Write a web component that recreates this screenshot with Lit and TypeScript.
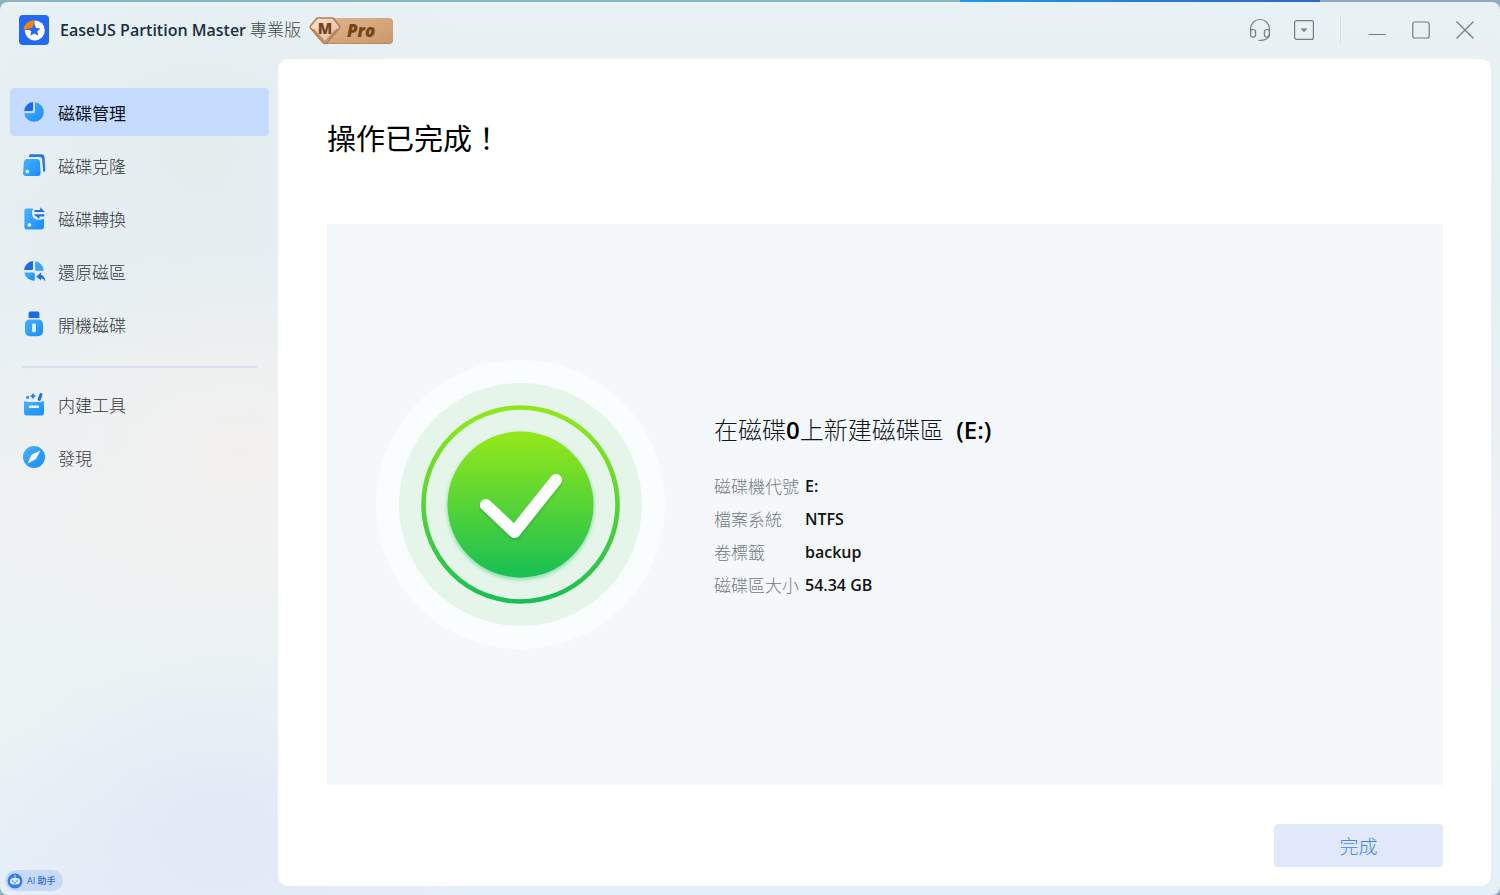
import { LitElement, html, css, svg } from "lit";
import { customElement, property, state } from "lit/decorators.js";

interface NavEntry {
  id: string;
  label: string;
}

const PRIMARY: NavEntry[] = [
  { id: "manage", label: "磁碟管理" },
  { id: "clone", label: "磁碟克隆" },
  { id: "convert", label: "磁碟轉換" },
  { id: "recover", label: "還原磁區" },
  { id: "boot", label: "開機磁碟" },
];

const SECONDARY: NavEntry[] = [
  { id: "tools", label: "内建工具" },
  { id: "discover", label: "發現" },
];

const DETAILS: [string, string][] = [
  ["磁碟機代號", "E:"],
  ["檔案系統", "NTFS"],
  ["卷標籤", "backup"],
  ["磁碟區大小", "54.34 GB"],
];

const GLYPHS: Record<string, unknown> = {
  manage: svg`
    <path d="M13 2.3A9.8 9.8 0 1 1 2.2 13.2H11.4A1.6 1.6 0 0 0 13 11.6Z" fill="url(#light)"/>
    <path d="M11 2.1V9.8A1.3 1.3 0 0 1 9.7 11.1H2.1A9.7 9.7 0 0 1 11 2.1Z" fill="#1a6be8"/>`,
  clone: svg`
    <path d="M8 1.2H19.4Q22.2 1.2 22.5 4L23.4 17.2Q23.4 18.8 21.2 18.8L20.2 6.4Q20 4 17.6 4H7Q7 1.2 8 1.2Z" fill="#2b74e4"/>
    <path d="M5 6H15Q17.6 6 17.9 8.6L18.6 20Q18.6 23 16 23H4Q1 23 1.1 20L2 8.6Q2.4 6 5 6Z" fill="url(#light)"/>
    <circle cx="5.2" cy="18.6" r="1.9" fill="#eaf7ff"/>`,
  convert: svg`
    <path d="M4.500 2.400H11.500Q10 4 10 7.500Q10.400 13 15.500 13.800Q19 14 22 12.800V21Q22 23.400 19.600 23.400H4.600Q2.400 23.400 2.400 21.200V4.600Q2.400 2.400 4.500 2.400Z" fill="url(#light)"/>
    <circle cx="7.400" cy="18.800" r="1.900" fill="#eaf7ff"/>
    <path d="M12.400 4H18.200V1.200L22.300 5.200V6H12.400Z" fill="#2370e3"/>
    <path d="M22.300 10.400H17.400V13L12.400 9V8.200H22.300Z" fill="#2370e3"/>`,
  recover: svg`
    <path d="M13.2 2.2A9.8 9.8 0 0 1 21.8 11.8H13.2Z" fill="#35a5fb"/>
    <path d="M2.2 13.4H11Q12.8 13.4 13 15.4L12.6 21.6A9.8 9.8 0 0 1 2.2 13.4Z" fill="url(#light)"/>
    <path d="M11 2.1V9.8A1.3 1.3 0 0 1 9.7 11.1H2.1A9.7 9.7 0 0 1 11 2.1Z" fill="#1a6be8"/>
    <path d="M14.2 17.4L19 13.4V15.8Q22.8 16.8 23.4 22.4Q21.4 19.4 19 19.2V21.4Z" fill="#2671e4"/>`,
  boot: svg`
    <path d="M8.2 -.4H15.8Q17.4 -.4 17.4 1.4V6H6.6V1.4Q6.6 -.4 8.2 -.4Z" fill="#1a6be8"/>
    <rect x="3" y="7.4" width="18" height="16.8" rx="4.600" fill="url(#light)"/>
    <rect x="10.2" y="11.4" width="3.6" height="8.8" rx="1.2" fill="#e5f6ff"/>`,
  tools: svg`
    <path d="M2 9.2Q12 11 22 9.2V21Q22 23.4 19.6 23.4H4.4Q2 23.4 2 21Z" fill="url(#light)"/>
    <path d="M11 1L12.1 3L14.2 4.1L12.1 5.2L11 7.3L9.9 5.2L7.8 4.1L9.9 3Z" fill="#2b7bea"/>
    <circle cx="5.6" cy="5.4" r="1.6" fill="#3a96f3"/>
    <path d="M19 2.6L17.2 7.4" stroke="#2370e3" stroke-width="3" stroke-linecap="round"/>
    <path d="M8 14.8H16" stroke="#f0faff" stroke-width="2.4" stroke-linecap="round"/>`,
  discover: svg`
    <circle cx="12" cy="12" r="11" fill="url(#light)"/>
    <path d="M18.4 5.6L14 14L5.6 18.4L9.6 9.8Z" fill="#fff"/>`,
};

@customElement("nav-item")
class NavItem extends LitElement {
  @property() icon = "";
  @property() label = "";
  @property({ type: Boolean }) active = false;

  static styles = css`
    :host { display: block; }
    .item {
      display: flex; align-items: center; gap: 12px;
      width: 100%; height: 48px; padding: 0 12px;
      border: 0; border-radius: 4px; background: none;
      font: inherit; font-size: 17px; color: #35393b; text-align: left; cursor: pointer;
    }
    .item.active { background: #c5dbff; color: #0b1320; font-weight: 400; }
    .icon { width: 24px; height: 24px; overflow: visible; flex: none; }
  `;

  render() {
    return html`
      <button class="item ${this.active ? "active" : ""}" aria-current=${this.active ? "page" : "false"}>
        <svg class="icon" viewBox="0 0 24 24" aria-hidden="true">
          <defs>
            <linearGradient id="light" x1="0" y1="0" x2="1" y2="1">
              <stop offset="0" stop-color="#4ab2fb"/>
              <stop offset="1" stop-color="#178cfa"/>
            </linearGradient>
          </defs>
          ${GLYPHS[this.icon]}
        </svg>
        <span>${this.label}</span>
      </button>`;
  }
}

@customElement("title-bar")
class TitleBar extends LitElement {
  static styles = css`
    :host { display: flex; align-items: center; justify-content: space-between; box-sizing: border-box; height: 57px; padding: 0 20px 2px 19px; }
    .brand, .actions, .name { display: flex; align-items: center; }
    .name { gap: 4px; margin: 0 8px 0 11px; font-size: 17px; line-height: 24px; color: #3c474d; }
    .product { font-weight: 600; font-size: 16px; color: #1e3040; }
    .logo { width: 30px; height: 30px; }
    .pro { width: 84px; height: 30px; }
    .tier { font: italic 800 17px "Open Sans", "Noto Sans", sans-serif; fill: #774419; }
    .grade { font: 800 15px "Open Sans", "Noto Sans", sans-serif; fill: #774419; }
    .tool { display: grid; place-items: center; width: 30px; height: 30px; padding: 0; border: 0; background: none; cursor: pointer; }
    .tool svg { width: 24px; height: 24px; fill: none; stroke: #737d82; stroke-width: 1.2; }
    .actions { gap: 14px; }
    .rule { width: 1px; height: 28px; margin: 0 7px; background: #d8e1e6; }
  `;

  render() {
    return html`
      <div class="brand">
        <svg class="logo" viewBox="0 0 30 30" aria-hidden="true">
          <rect width="30" height="30" rx="4" fill="#2468f6"/>
          <circle cx="15.800" cy="15.400" r="10" fill="#fff"/>
          <path d="M15.500 4.500V11L11 15H3.500Q4 6 15.500 4.500Z" fill="#2468f6"/>
          <path d="M15.300 9L17.100 13L21.600 13.400L18.300 16.400L19.300 20.800L15.300 18.500L11.300 20.800L12.300 16.400L9 13.400L13.500 13Z" fill="#2468f6"/>
          <path d="M14.800 5V9L12.800 13L9 13.600L8 14.400H4.400Q5.200 6.800 14.800 5Z" fill="#f8820e"/>
        </svg>
        <div class="name"><span class="product">EaseUS Partition Master</span><span>專業版</span></div>
        <svg class="pro" viewBox="0 0 84 30" role="img" aria-label="Pro">
          <defs>
            <linearGradient id="bronze" x1="0" y1="0" x2="1" y2="1">
              <stop offset="0" stop-color="#e0b48e"/><stop offset="1" stop-color="#cc986a"/>
            </linearGradient>
            <linearGradient id="gem" x1="0" y1="0" x2="1" y2="1">
              <stop offset="0" stop-color="#fae3d0"/><stop offset="1" stop-color="#e3b795"/>
            </linearGradient>
          </defs>
          <path d="M9 20H84V25Q84 29 80 29H17Z" fill="#b9895f"/>
          <rect x="12" y="3" width="72" height="25" rx="4" fill="url(#bronze)"/>
          <path d="M8 3H24L30.500 11Q31 12 30.500 13L18 27.500Q16 29.500 14 27.500L1.500 13Q1 12 1.500 11Z" fill="url(#gem)" stroke="#b17d55" stroke-width="1.600" stroke-linejoin="round"/>
          <path d="M4 14L16 27L28 14" fill="none" stroke="#bd8659" stroke-width="1.400"/>
          <text class="grade" x="16" y="19" text-anchor="middle">M</text>
          <text class="tier" x="38" y="22">Pro</text>
        </svg>
      </div>
      <div class="actions">
        <button class="tool" aria-label="支援">
          <svg viewBox="0 0 24 24"><path d="M2.600 13V10.500A9.400 9 0 0 1 21.400 10.500V13"/><rect x="2.600" y="11.500" width="5" height="7.600" rx="2.400"/><rect x="16.400" y="11.500" width="5" height="7.600" rx="2.400"/><path d="M21.400 16Q21.400 22.500 10.500 22.500"/></svg>
        </button>
        <button class="tool" aria-label="選單">
          <svg viewBox="0 0 24 24"><rect x="2.600" y="2.600" width="18.800" height="18.800" rx="2"/><path d="M8.500 10.600H15.500L12 14Z" fill="#737d82" stroke="none"/></svg>
        </button>
        <span class="rule"></span>
        <button class="tool" aria-label="最小化"><svg viewBox="0 0 24 24"><path d="M3.500 16.500H20.500"/></svg></button>
        <button class="tool" aria-label="最大化"><svg viewBox="0 0 24 24"><rect x="3.800" y="4" width="16.400" height="16" rx="2"/></svg></button>
        <button class="tool" aria-label="關閉"><svg viewBox="0 0 24 24"><path d="M3.500 3.500L20.500 20.500M20.500 3.500L3.500 20.500"/></svg></button>
      </div>`;
  }
}

@customElement("success-mark")
class SuccessMark extends LitElement {
  static styles = css`
    :host { display: block; flex: none; }
    svg { display: block; width: 290px; height: 290px; }
  `;

  render() {
    return html`
      <svg viewBox="0 0 290 290" aria-hidden="true">
        <defs>
          <linearGradient id="green" x1="0" y1="0" x2="0" y2="1">
            <stop offset="0.050" stop-color="#90e61c"/><stop offset="1" stop-color="#18bf54"/>
          </linearGradient>
          <filter id="glow" x="-20%" y="-20%" width="140%" height="140%">
            <feDropShadow dx="0" dy="2" stdDeviation="2" flood-color="#18bf54" flood-opacity="0.500"/>
          </filter>
          <filter id="lift" x="-20%" y="-20%" width="140%" height="140%">
            <feDropShadow dx="0" dy="2" stdDeviation="1" flood-color="#0c9a3c" flood-opacity="0.500"/>
          </filter>
        </defs>
        <circle cx="144.500" cy="144.500" r="144.500" fill="#fafdfd"/>
        <circle cx="144.500" cy="144.500" r="121.500" fill="#e6f5ea"/>
        <circle cx="144.500" cy="144.500" r="97" fill="none" stroke="url(#green)" stroke-width="4.600"/>
        <circle cx="144.500" cy="144.500" r="73" fill="url(#green)" filter="url(#glow)"/>
        <path d="M110 145L138.500 172L180 120" fill="none" stroke="#fff" stroke-width="12" stroke-linecap="round" stroke-linejoin="round" filter="url(#lift)"/>
      </svg>`;
  }
}

@customElement("app-root")
class AppRoot extends LitElement {
  @state() private current = "manage";

  static styles = css`
    :host {
      display: block; height: 100vh; padding-top: 2px; box-sizing: border-box;
      background: linear-gradient(90deg, #8fb1c4 0 64%, #2396e6 64%, #2f66c8 88%, #8fabc6 88%);
      font-family: "Open Sans", "Noto Sans", "Noto Sans CJK TC", sans-serif; font-weight: 300;
    }
    .window {
      display: flex; flex-direction: column; height: 100%; border-radius: 8px; overflow: hidden;
      background:
        radial-gradient(ellipse 260px 190px at 220px 830px, #e2e8f6, #e2e8f600),
        radial-gradient(ellipse 300px 220px at 240px 450px, #f2f0ef, #f2f0ef00),
        radial-gradient(ellipse 300px 240px at 200px 150px, #e4ecee, #e4ecee00),
        linear-gradient(180deg, #e8f2f4 0, #e5f0f4 30%, #eef2f3 60%, #eaf4f4 82%, #e5eff8 100%);
    }
    .body { display: flex; flex: 1; min-height: 0; }
    .side { display: flex; flex-direction: column; width: 278px; flex: none; box-sizing: border-box; padding: 29px 9px 4px 10px; }
    .group { display: flex; flex-direction: column; gap: 5px; }
    .divider { width: auto; height: 2px; margin: 18px 12px 12px; border: 0; background: #dadeed; }
    .assistant {
      display: flex; align-items: center; gap: 4px; align-self: flex-start; height: 21px; margin-top: auto; margin-left: -5px;
      padding: 0 7px 0 2px; border: 0; border-radius: 11px; background: #c8d9f8; color: #2668d8;
      font: 500 9px "Open Sans", "Noto Sans", "Noto Sans CJK TC", sans-serif;
    }
    .assistant svg { width: 16px; height: 16px; }
    .card {
      display: flex; flex-direction: column; flex: 1; margin: 0 9px 9px 0; padding: 60px 48px 19px 49px;
      border-radius: 10px; background: #fff;
    }
    .title { margin: 0; font-size: 29px; line-height: 40px; font-weight: 400; color: #000; }
    .panel { display: flex; align-items: center; gap: 48px; flex: 1; margin: 65px 0 39px; padding-left: 49px; background: #f4f8fb; }
    .summary { padding-top: 6px; }
    .heading { margin: 0 0 24px; font-size: 24px; line-height: 32px; font-weight: 300; color: #14181a; white-space: pre; }
    .heading b { font-weight: 600; color: #000; }
    .facts { display: grid; grid-template-columns: auto 1fr; column-gap: 6px; margin: 0; line-height: 33px; }
    .facts dt { font-size: 17px; color: #74797d; }
    .facts dd { margin: 0; font-size: 16px; font-weight: 600; color: #111; }
    .done {
      align-self: flex-end; width: 169px; height: 43px; border: 0; border-radius: 4px;
      background: #e0e8f9; color: #3f86f4; font: inherit; font-size: 19px; cursor: pointer;
    }
  `;

  private items(list: NavEntry[]) {
    return list.map(
      (n) => html`<nav-item .icon=${n.id} .label=${n.label} .active=${n.id === this.current} @click=${() => (this.current = n.id)}></nav-item>`,
    );
  }

  render() {
    return html`
      <div class="window">
        <title-bar></title-bar>
        <div class="body">
          <nav class="side">
            <div class="group">${this.items(PRIMARY)}</div>
            <hr class="divider" />
            <div class="group">${this.items(SECONDARY)}</div>
            <button class="assistant">
              <svg viewBox="0 0 16 16" aria-hidden="true">
                <circle cx="8" cy="8" r="7.500" fill="#2f7df2"/>
                <path d="M8 2V5" stroke="#cfe3ff" stroke-width="1"/>
                <rect x="3" y="5" width="10" height="6.500" rx="3.200" fill="#dceaff"/>
                <circle cx="6" cy="8" r="0.700" fill="#2457a8"/><circle cx="10" cy="8" r="0.700" fill="#2457a8"/>
                <path d="M7 9.600Q8 10.400 9 9.600" fill="none" stroke="#2457a8" stroke-width="0.700"/>
              </svg>
              <span>AI 助手</span>
            </button>
          </nav>
          <main class="card">
            <h1 class="title">操作已完成！</h1>
            <section class="panel">
              <success-mark></success-mark>
              <div class="summary">
                <h2 class="heading">在磁碟<b>0</b>上新建磁碟區<b>  (E:)</b></h2>
                <dl class="facts">${DETAILS.map(([k, v]) => html`<dt>${k}</dt><dd>${v}</dd>`)}</dl>
              </div>
            </section>
            <button class="done">完成</button>
          </main>
        </div>
      </div>`;
  }
}
